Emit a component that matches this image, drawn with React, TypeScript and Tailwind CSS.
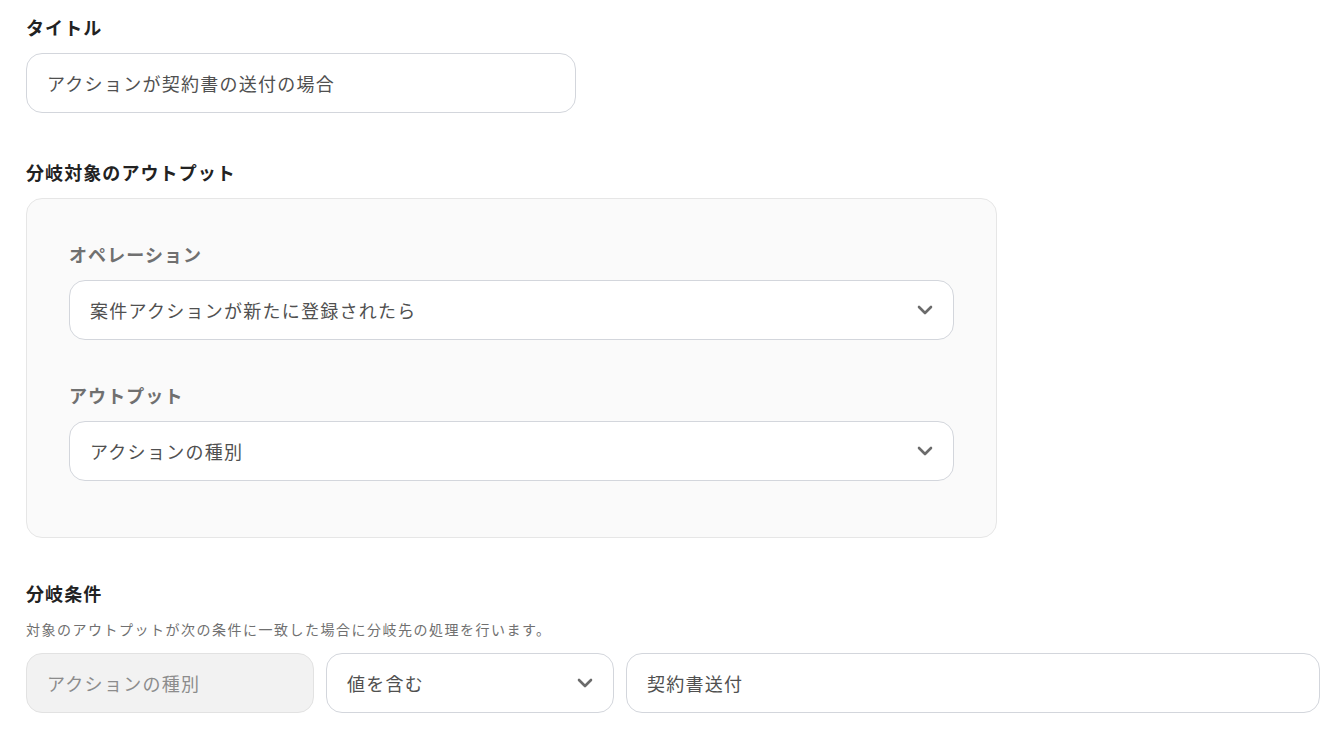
const font = { fontFamily: '"Noto Sans CJK JP", "Noto Sans", sans-serif' };

function Chevron() {
  return (
    <svg width="16" height="10" viewBox="0 0 16 10" fill="none" className="shrink-0">
      <path d="M2 2l6 6 6-6" stroke="#6b6b6b" strokeWidth="2.6" strokeLinecap="round" strokeLinejoin="round" />
    </svg>
  );
}

function SectionLabel({ children }: { children: string }) {
  return <div className="text-[18px] leading-[27px] font-bold tracking-[0.06em] text-[#222222]">{children}</div>;
}

function SubLabel({ children }: { children: string }) {
  return <div className="text-[18px] leading-[27px] font-bold tracking-[0.06em] text-[#707070]">{children}</div>;
}

function SelectBox({ value, className = "" }: { value: string; className?: string }) {
  return (
    <div
      className={`flex h-[60px] items-center justify-between rounded-[16px] border border-[#d3d6dc] bg-white pl-5 pr-5 ${className}`}
    >
      <span className="text-[18px] tracking-[0.07em] text-[#505050]">{value}</span>
      <Chevron />
    </div>
  );
}

export default function App() {
  return (
    <div className="min-h-screen bg-white pl-[26px] pt-[14px]" style={font}>
      <SectionLabel>タイトル</SectionLabel>
      <div className="mt-3 flex h-[60px] w-[550px] items-center rounded-[16px] border border-[#d3d6dc] bg-white px-5">
        <span className="text-[18px] tracking-[0.07em] text-[#505050]">アクションが契約書の送付の場合</span>
      </div>

      <div className="mt-[46px]">
        <SectionLabel>分岐対象のアウトプット</SectionLabel>
      </div>
      <div className="mt-3 w-[971px] rounded-[16px] border border-[#e6e6e6] bg-[#fafafa] px-[42px] pt-[42px] pb-[56px]">
        <SubLabel>オペレーション</SubLabel>
        <SelectBox value="案件アクションが新たに登録されたら" className="mt-3" />
        <div className="mt-[42px]">
          <SubLabel>アウトプット</SubLabel>
        </div>
        <SelectBox value="アクションの種別" className="mt-3" />
      </div>

      <div className="mt-[42px]">
        <SectionLabel>分岐条件</SectionLabel>
      </div>
      <div className="mt-3 text-[14px] leading-[21px] tracking-[1.5px] text-[#707070]">
        対象のアウトプットが次の条件に一致した場合に分岐先の処理を行います。
      </div>
      <div className="mt-[13px] flex gap-3">
        <div className="flex h-[60px] w-[288px] shrink-0 items-center rounded-[16px] border border-[#e2e2e2] bg-[#f2f2f2] px-5">
          <span className="text-[18px] tracking-[0.07em] text-[#8c8c8c]">アクションの種別</span>
        </div>
        <SelectBox value="値を含む" className="w-[288px] shrink-0" />
        <div className="flex h-[60px] w-[694px] shrink-0 items-center rounded-[16px] border border-[#d3d6dc] bg-white px-5">
          <span className="text-[18px] tracking-[0.07em] text-[#505050]">契約書送付</span>
        </div>
      </div>
    </div>
  );
}
